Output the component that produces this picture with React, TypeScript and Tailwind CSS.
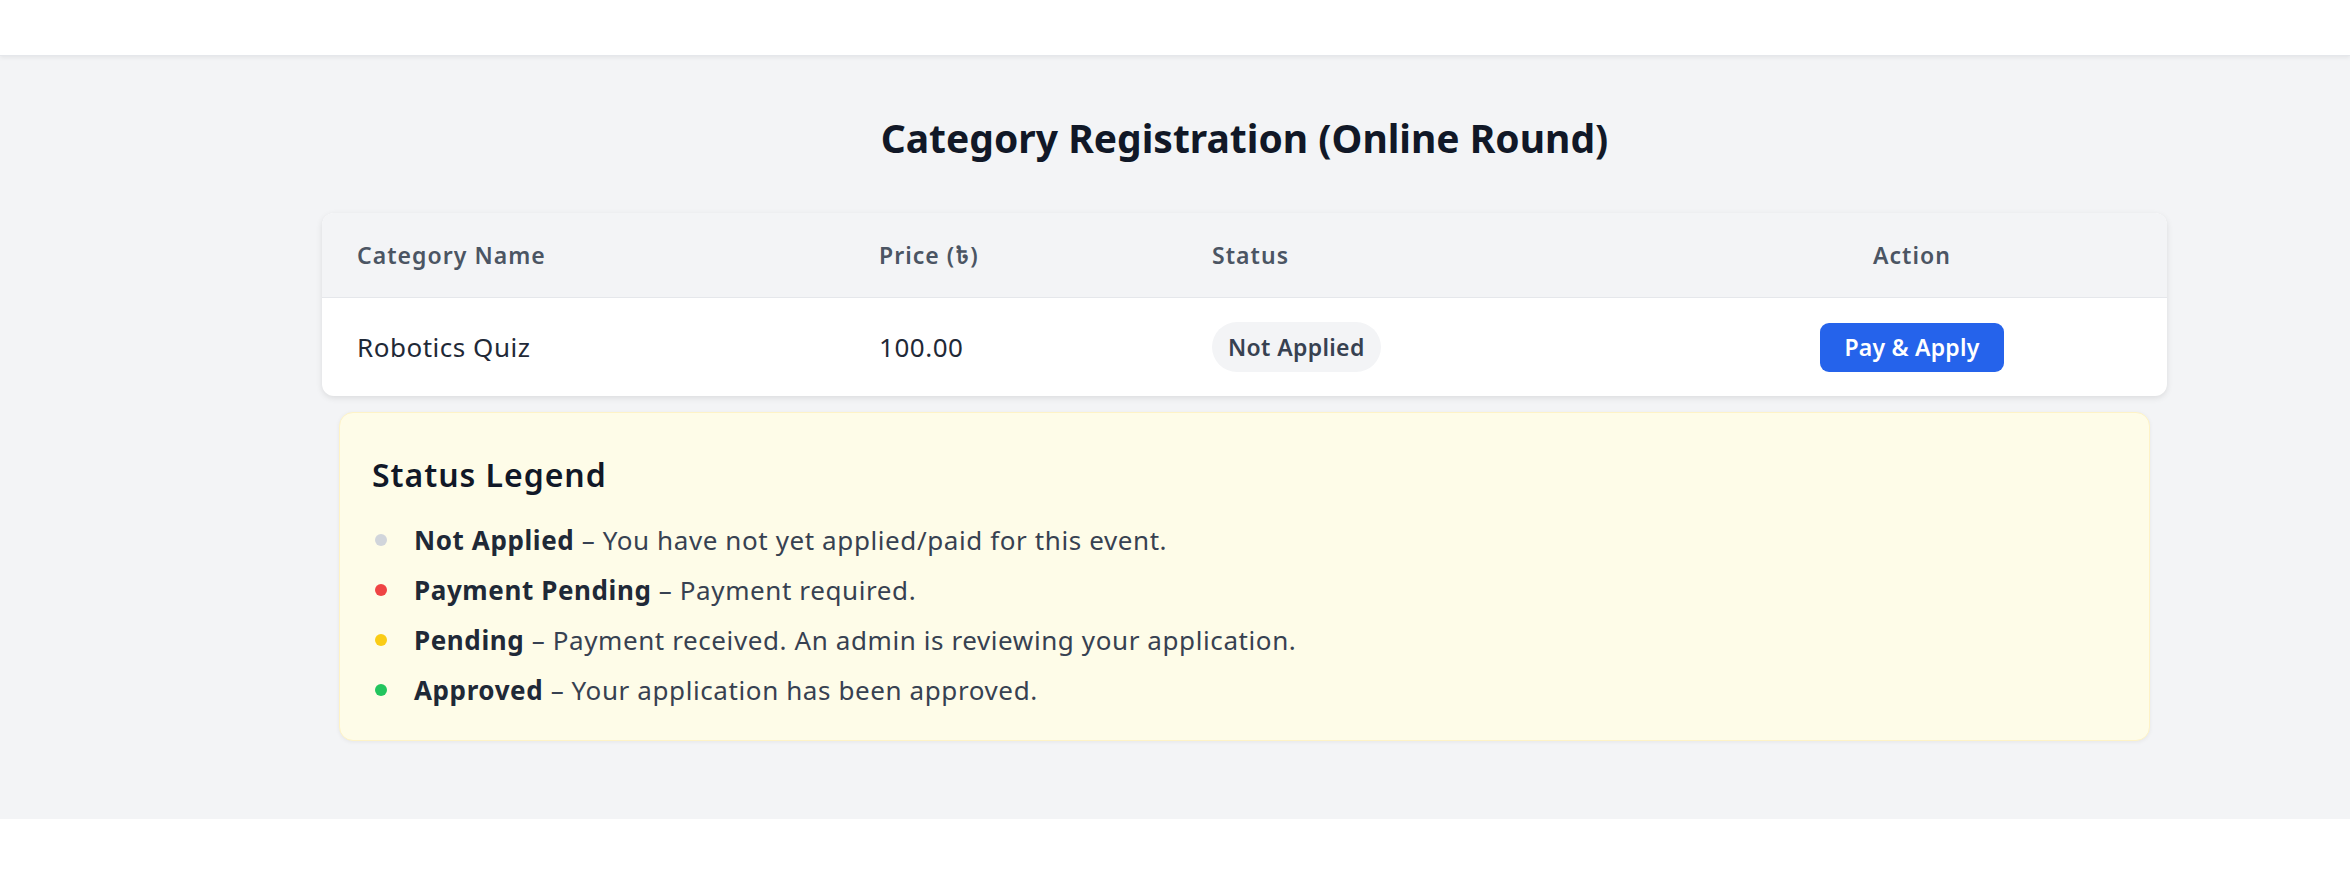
import React from "react";

const legend = [
  { dot: "bg-[#d1d5db]", label: "Not Applied", text: "You have not yet applied/paid for this event." },
  { dot: "bg-[#ef4444]", label: "Payment Pending", text: "Payment required." },
  { dot: "bg-[#facc15]", label: "Pending", text: "Payment received. An admin is reviewing your application." },
  { dot: "bg-[#22c55e]", label: "Approved", text: "Your application has been approved." },
];

export default function App() {
  return (
    <div className="w-[2350px] bg-white" style={{ fontFamily: "'Noto Sans', 'Noto Sans Bengali', 'DejaVu Sans', sans-serif" }}>
      <header className="h-[56px] bg-white border-b border-[#e5e7eb] shadow-[0_2px_4px_rgba(0,0,0,0.06)] relative z-10" />
      <main className="bg-[#f3f4f6] pt-[58px] pb-[78px]">
        <div className="ml-[322px] w-[1845px]">
          <h1 className="text-center text-[39px] leading-[48px] font-bold text-[#111827] mb-[51px]">
            Category Registration (Online Round)
          </h1>

          <div className="bg-white rounded-[12px] overflow-hidden shadow-[0_2px_6px_rgba(0,0,0,0.10)]">
            <div className="grid grid-cols-[521px_333px_481px_510px] h-[84px] items-center bg-[#f3f4f6] text-[23px] font-semibold tracking-[0.045em] text-[#4b5563]">
              <div className="px-[35px]">Category Name</div>
              <div className="px-[36px]">Price (৳)</div>
              <div className="px-[36px]">Status</div>
              <div className="px-[36px] text-center">Action</div>
            </div>
            <div className="grid grid-cols-[521px_333px_481px_510px] h-[99px] items-center border-t border-[#e5e7eb] text-[26px] tracking-[0.02em] text-[#1f2937]">
              <div className="px-[35px]">Robotics Quiz</div>
              <div className="px-[36px]">100.00</div>
              <div className="px-[36px]">
                <span className="inline-flex items-center h-[50px] px-[16px] rounded-full bg-[#f3f4f6] text-[23px] tracking-[0.015em] font-semibold text-[#374151]">
                  Not Applied
                </span>
              </div>
              <div className="px-[36px] flex justify-center">
                <button className="h-[49px] px-[24px] rounded-[9px] bg-[#2563eb] text-white text-[23px] tracking-[0.01em] font-semibold">
                  Pay &amp; Apply
                </button>
              </div>
            </div>
          </div>

          <div className="mx-[17px] mt-[16px] bg-[#fefce8] border border-[#fef3c7] rounded-[14px] shadow-[0_1px_4px_rgba(0,0,0,0.06)] pt-[41px] pb-[32px] px-[32px]">
            <h2 className="text-[32px] leading-[42px] tracking-[0.03em] font-semibold text-[#111827] mb-[26px]">Status Legend</h2>
            <ul className="flex flex-col gap-[14px]">
              {legend.map((l) => (
                <li key={l.label} className="flex items-center h-[36px] text-[26px] tracking-[0.023em] text-[#374151]">
                  <span className={`w-[12px] h-[12px] rounded-full ${l.dot} ml-[3px] mr-[27px]`} />
                  <span>
                    <b className="font-bold text-[#1f2937]">{l.label}</b> – {l.text}
                  </span>
                </li>
              ))}
            </ul>
          </div>
        </div>
      </main>
    </div>
  );
}
